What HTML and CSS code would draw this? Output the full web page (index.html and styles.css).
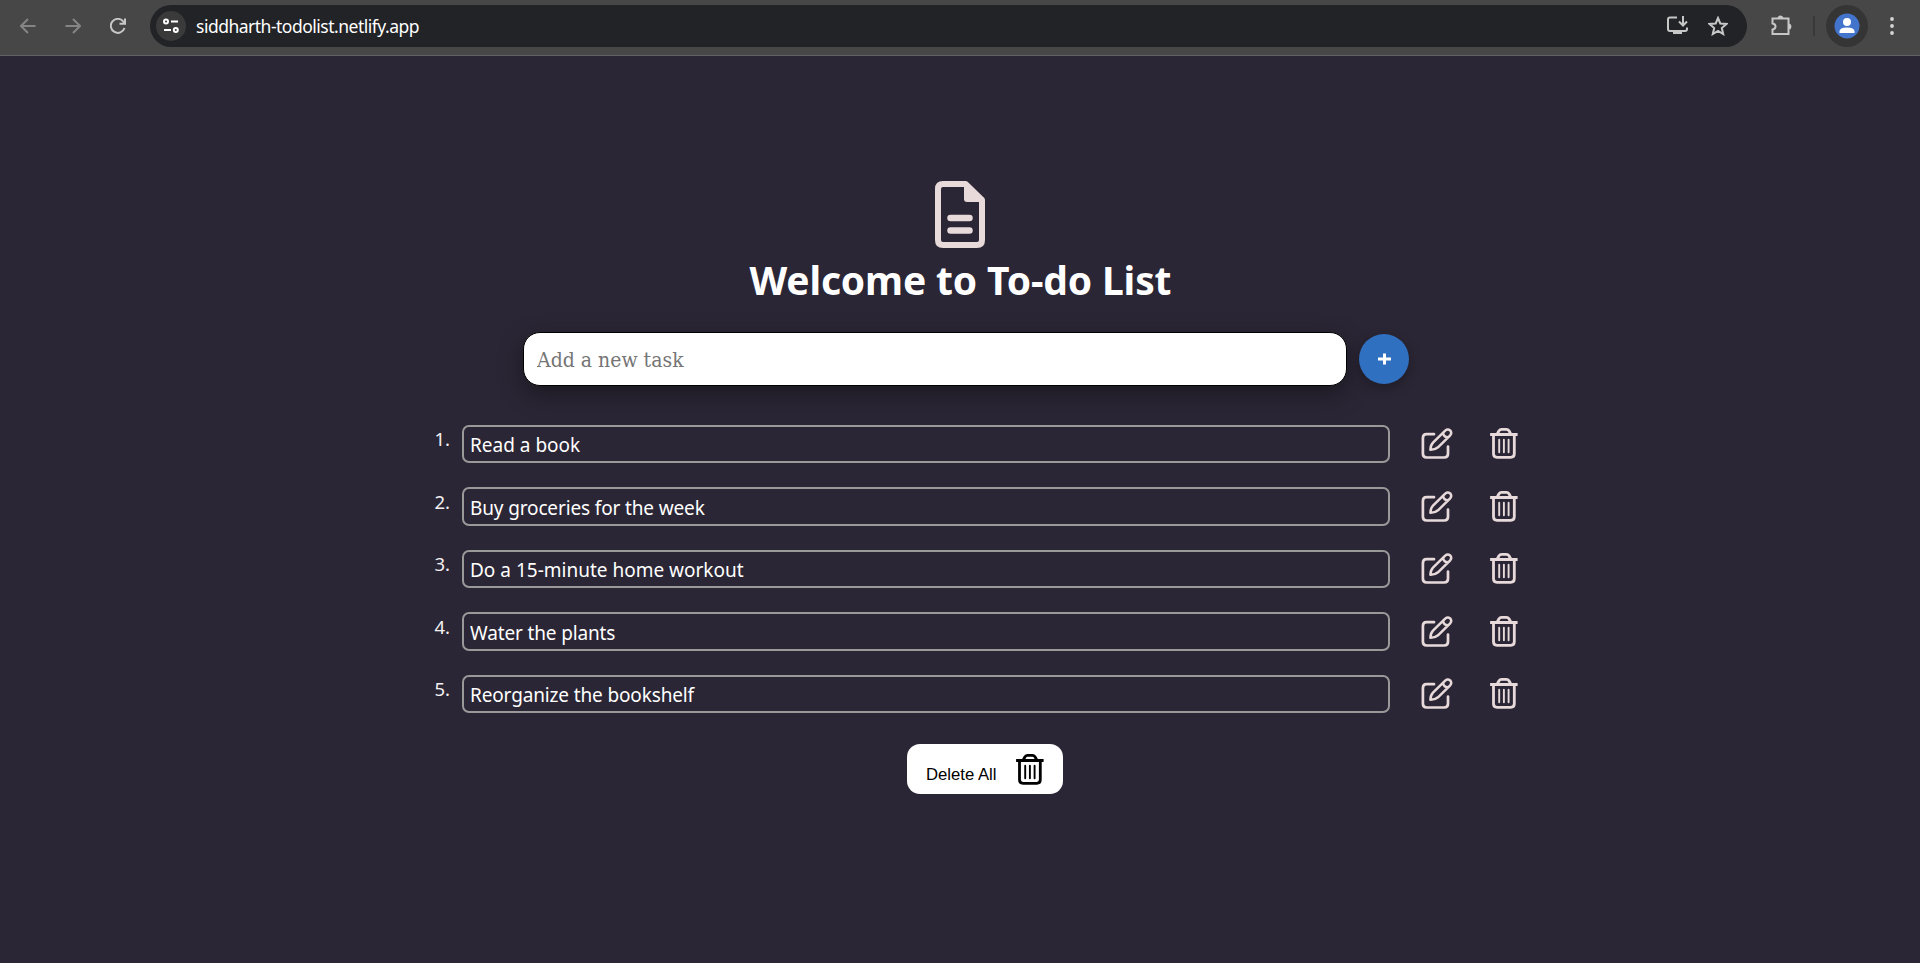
FILE: index.html
```html
<!DOCTYPE html>
<html lang="en">
<head>
<meta charset="utf-8">
<title>To-do List</title>
<link rel="stylesheet" href="styles.css">
</head>
<body>
<svg class="defs" width="0" height="0">
  <symbol id="edit" viewBox="0 0 32 32">
    <path d="M13 6.200H5.700Q1.900 6.200 1.900 10V25.700Q1.900 29.500 5.700 29.500H23.200Q27 29.500 27 25.700V18.500" fill="none" stroke="currentColor" stroke-width="2.700" stroke-linecap="round"/>
    <path d="M9.400 21.800Q9.400 17.500 12 14.700L24.200 2.600Q26.700 .500 29.200 2.400Q31.200 4.900 29.200 7.300L17 19.300Q14 21.900 9.400 21.800ZM22.100 4.800Q22.500 9 27 9.300" fill="none" stroke="currentColor" stroke-width="2.500" stroke-linecap="round" stroke-linejoin="round"/>
  </symbol>
  <symbol id="trash" viewBox="0 0 28 34">
    <path d="M1.500 7.500H26.200M3.500 8.500V26.800Q3.500 30.300 7 30.300H20.800Q24.300 30.300 24.300 26.800V8.500M7.500 6.500L9 3.800Q10 2.300 11.500 2.300H16.500Q18 2.300 19 3.800L20.500 6.500" fill="none" stroke="currentColor" stroke-width="2.800" stroke-linecap="square"/>
    <path d="M9.200 12.700V25.300M13.900 12.700V25.300M18.600 12.700V25.300" stroke="currentColor" stroke-width="1.900" stroke-linecap="round"/>
  </symbol>
</svg>
<header class="toolbar">
  <svg class="nav dim" viewBox="0 0 16 16"><path d="M15.500 8H1.500M8 1L1 8L8 15"/></svg>
  <svg class="nav dim" viewBox="0 0 16 16"><path d="M.500 8H14.500M8 1L15 8L8 15"/></svg>
  <svg class="nav" viewBox="0 0 16 16"><path d="M14.500 10A7 7 0 1 1 13.300 3.500L15 5.500M15 .500V5.800H9.500"/></svg>
  <div class="address">
    <span class="site"><svg width="16" height="16" viewBox="0 0 16 16"><g fill="none" stroke="currentColor" stroke-width="2"><circle cx="3" cy="3.500" r="2"/><path d="M8 3.500H15M1 12H8"/><circle cx="12.800" cy="12" r="2"/></g></svg></span>
    <span class="url">siddharth-todolist.netlify.app</span>
    <svg class="install" viewBox="0 0 21 19"><path d="M10 1.500H3Q1 1.500 1 3.500V13Q1 15 3 15H18Q20 15 20 13V11.500M16 0V9M12 5.500L16 9.500L20 5.500"/><path d="M7 15.500H14V17H7Z" fill="currentColor"/></svg>
    <svg class="star" viewBox="0 0 20 20"><path d="M10 2L12.300 7.500L18.500 8L13.800 12L15.200 18L10 14.800L4.800 18L6.200 12L1.500 8L7.700 7.500Z"/></svg>
  </div>
  <svg class="puzzle" viewBox="0 0 21 21"><path d="M1.500 3.500H17.500V19H1.500V14.500Q4.500 14 4.500 11.500Q4.500 9 1.500 8.500Z"/><path d="M6.500 3Q7 .500 9.500 .500Q12 .500 12.500 3ZM18 8.500Q20.500 9 20.500 11.500Q20.500 14 18 14.500Z" fill="currentColor" stroke="none"/></svg>
  <span class="divider"></span>
  <span class="profile"><svg width="26" height="26" viewBox="0 0 26 26"><circle cx="13" cy="13" r="12.500" fill="#4374cb"/><circle cx="13" cy="9" r="4" fill="#fff"/><path d="M5.500 20V18.500Q5.500 14.500 13 14.500Q20.500 14.500 20.500 18.500V20Z" fill="#fff"/></svg></span>
  <svg class="dots" viewBox="0 0 4 18"><circle cx="2" cy="2" r="1.900"/><circle cx="2" cy="9" r="1.900"/><circle cx="2" cy="16" r="1.900"/></svg>
</header>
<main class="page">
  <svg class="doc" viewBox="0 0 50 67"><path d="M8 3H30.500L47 19V59Q47 64 42 64H8Q3 64 3 59V8Q3 3 8 3Z" fill="none" stroke="currentColor" stroke-width="6" stroke-linejoin="round"/><path d="M29 3V18Q29 21 32 21H47V17L33 3Z" fill="currentColor"/><path d="M15.500 37H34.500M15.500 49.500H34.500" stroke="currentColor" stroke-width="6.500" stroke-linecap="round"/></svg>
  <h1 class="title">Welcome to To-do List</h1>
  <form class="add">
    <input class="task-input" placeholder="Add a new task">
    <button class="plus" type="button"><svg width="13" height="12" viewBox="0 0 13 12"><path d="M0 6H13M6.500 .500V11.500" stroke="#fff" stroke-width="3"/></svg></button>
  </form>
  <ol class="tasks">
    <li class="task"><span class="num">1.</span><span class="text">Read a book</span><svg class="edit"><use href="#edit"/></svg><svg class="trash"><use href="#trash"/></svg></li>
    <li class="task"><span class="num">2.</span><span class="text snug">Buy groceries for the week</span><svg class="edit"><use href="#edit"/></svg><svg class="trash"><use href="#trash"/></svg></li>
    <li class="task"><span class="num">3.</span><span class="text">Do a 15-minute home workout</span><svg class="edit"><use href="#edit"/></svg><svg class="trash"><use href="#trash"/></svg></li>
    <li class="task"><span class="num">4.</span><span class="text snug">Water the plants</span><svg class="edit"><use href="#edit"/></svg><svg class="trash"><use href="#trash"/></svg></li>
    <li class="task"><span class="num">5.</span><span class="text snug">Reorganize the bookshelf</span><svg class="edit"><use href="#edit"/></svg><svg class="trash"><use href="#trash"/></svg></li>
  </ol>
  <button class="delete-all" type="button"><span>Delete All</span><svg class="trash"><use href="#trash"/></svg></button>
</main>
</body>
</html>
```
FILE: styles.css
```css
* { box-sizing: border-box; }
body { margin: 0; height: 963px; overflow: hidden; background: #2b2635; color: #fff; font-family: "Noto Sans", sans-serif; }
svg { display: block; flex: none; }
.defs { position: absolute; }
.toolbar { display: flex; align-items: center; height: 56px; padding: 0 0 4px 20px; background: #474747; border-bottom: 1px solid #626166; color: #c7c7c7; }
.toolbar svg { fill: none; stroke: currentColor; stroke-width: 2; }
.nav { width: 16px; height: 16px; margin-right: 29px; }
.nav.dim { color: #858585; }
.address { display: flex; flex: none; align-items: center; width: 1597px; height: 42px; margin-left: -5px; padding: 0 19px 0 6px; border-radius: 21px; background: #222326; }
.site { display: flex; align-items: center; justify-content: center; width: 30px; height: 30px; border-radius: 50%; background: #3a3a3b; color: #fff; }
.toolbar .site svg { stroke: none; }
.url { flex: 1; margin-left: 10px; color: #fff; font-size: 17.500px; line-height: 24px; letter-spacing: -.5px; }
.install { width: 21px; height: 19px; margin-right: 20px; }
.star { width: 20px; height: 20px; }
.puzzle { width: 21px; height: 21px; margin-left: 24px; }
.divider { width: 2px; height: 20px; margin-left: 21px; background: #393939; }
.profile { display: flex; align-items: center; justify-content: center; width: 42px; height: 42px; margin-left: 11px; border-radius: 50%; background: #353535; }
.toolbar .profile svg { stroke: none; }
.toolbar .dots { width: 4px; height: 18px; margin-left: 22px; fill: #d5d5d5; stroke: none; }
.page { display: flex; flex-direction: column; padding-top: 125px; }
.doc { width: 50px; height: 67px; margin-left: 935px; color: #e8dada; }
.title { width: 422px; height: 54px; margin: 5px 0 0 749.500px; font-size: 39px; line-height: 54px; letter-spacing: -.15px; white-space: nowrap; }
.add { display: flex; align-items: center; gap: 12px; margin: 25px 0 0 523px; }
.task-input { width: 824px; height: 54px; padding: 1px 13px 0; border: 1px solid #000; border-radius: 17px; background: #fff; font: 21px "DejaVu Serif Condensed", "DejaVu Serif", serif; letter-spacing: 0; box-shadow: 0 8px 24px rgba(0,0,0,.4); }
.task-input::placeholder { color: #757575; opacity: 1; }
.plus { display: flex; align-items: center; justify-content: center; width: 50px; height: 50px; padding: 0; border: 0; border-radius: 50%; background: #3070c0; box-shadow: 0 4px 12px rgba(0,0,0,.3); }
.tasks { display: flex; flex-direction: column; gap: 24px; margin: 38.900px 0 0 420px; padding: 0; list-style: none; }
.task { display: flex; align-items: center; height: 38.500px; color: #e8dada; }
.num { width: 30px; margin: -10px 12px 0 0; text-align: right; font-size: 18.500px; line-height: 26px; color: #f4f0f1; }
.text { display: flex; align-items: center; width: 928px; height: 38.500px; padding: 2px 6px 0; border: 2px solid #999; border-radius: 7px; color: #fff; font-size: 19px; line-height: 26px; white-space: nowrap; }
.text.snug { letter-spacing: -.14px; }
.edit { width: 32px; height: 32px; margin-left: 31px; }
.trash { width: 28px; height: 34px; }
.edit + .trash { margin-left: 37px; }
.delete-all { display: flex; width: 156px; height: 50px; margin: 30.600px 0 0 907px; padding: 9px 0 0 19px; border: 0; border-radius: 13px; background: #fff; color: #000; font: 16.700px "Liberation Sans", sans-serif; }
.delete-all span { width: 90px; margin-top: 12px; text-align: left; white-space: nowrap; }
```
